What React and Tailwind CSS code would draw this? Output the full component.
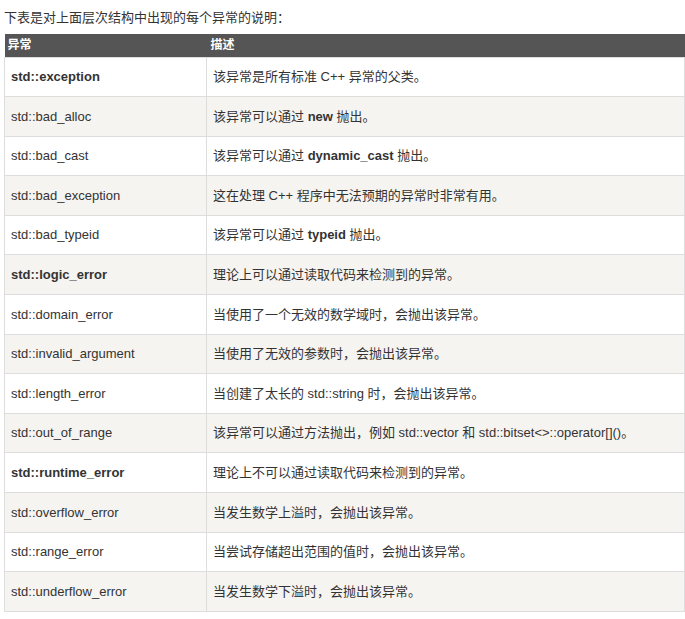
const rows = [
  ['std::exception', true, <>该异常是所有标准 C++ 异常的父类。</>],
  ['std::bad_alloc', false, <>该异常可以通过 <b>new</b> 抛出。</>],
  ['std::bad_cast', false, <>该异常可以通过 <b>dynamic_cast</b> 抛出。</>],
  ['std::bad_exception', false, <>这在处理 C++ 程序中无法预期的异常时非常有用。</>],
  ['std::bad_typeid', false, <>该异常可以通过 <b>typeid</b> 抛出。</>],
  ['std::logic_error', true, <>理论上可以通过读取代码来检测到的异常。</>],
  ['std::domain_error', false, <>当使用了一个无效的数学域时，会抛出该异常。</>],
  ['std::invalid_argument', false, <>当使用了无效的参数时，会抛出该异常。</>],
  ['std::length_error', false, <>当创建了太长的 std::string 时，会抛出该异常。</>],
  ['std::out_of_range', false, <>该异常可以通过方法抛出，例如 std::vector 和 std::bitset&lt;&gt;::operator[]()。</>],
  ['std::runtime_error', true, <>理论上不可以通过读取代码来检测到的异常。</>],
  ['std::overflow_error', false, <>当发生数学上溢时，会抛出该异常。</>],
  ['std::range_error', false, <>当尝试存储超出范围的值时，会抛出该异常。</>],
  ['std::underflow_error', false, <>当发生数学下溢时，会抛出该异常。</>],
]

export default function App() {
  return (
    <div className="w-[685px] h-[619px] bg-white text-[#333] text-[13px] font-[Liberation_Sans,Noto_Sans_CJK_SC,sans-serif] overflow-hidden">
      <p className="pt-[8px] pl-[4px] h-[34px] text-[13px]">下表是对上面层次结构中出现的每个异常的说明：</p>
      <table className="ml-[4px] w-[681px] border-collapse">
        <thead>
          <tr className="bg-[#555] text-white h-[23px]">
            <th className="w-[202px] text-left font-bold text-[12px] px-[3px]">异常</th>
            <th className="text-left font-bold text-[12px] px-[4px]">描述</th>
          </tr>
        </thead>
        <tbody>
          {rows.map(([name, bold, desc], i) => (
            <tr key={name} className={`h-[39.6px] border border-[#ddd] ${i % 2 ? 'bg-[#f6f4f0]' : 'bg-white'}`}>
              <td className={`px-[6px] border-r border-[#ddd] ${bold ? 'font-bold' : ''}`}>{name}</td>
              <td className="px-[6px]">{desc}</td>
            </tr>
          ))}
        </tbody>
      </table>
    </div>
  )
}
